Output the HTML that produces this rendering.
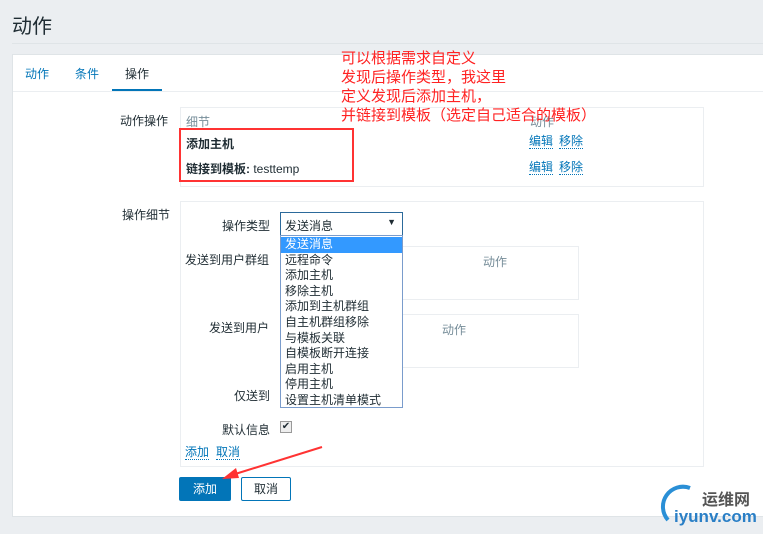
<!DOCTYPE html>
<html><head><meta charset="utf-8"><style>
*{margin:0;padding:0;box-sizing:border-box}
body{width:763px;height:534px;background:#ebeef1;font-family:"Liberation Sans","Noto Sans CJK SC",sans-serif;font-size:12px;color:#1f2c33;position:relative;overflow:hidden}
.a{position:absolute;white-space:nowrap}
.lnk{color:#0275b8;border-bottom:1px dotted #0275b8;line-height:13px}
.red{color:#f22;font-size:15px;line-height:19px}
.opt{height:15.6px;line-height:15.6px;padding-left:4px;font-size:12px}
</style></head><body>
<div class="a" style="left:12px;top:10px;font-size:20px;color:#1f2c33">动作</div>
<div class="a" style="left:12px;top:43px;width:751px;height:1px;background:#dfe4e7"></div>
<div class="a" style="left:12px;top:54px;width:760px;height:463px;background:#fff;border:1px solid #dfe4e7"></div>
<div class="a" style="left:25px;top:65px;color:#0275b8">动作</div>
<div class="a" style="left:75px;top:65px;color:#0275b8">条件</div>
<div class="a" style="left:125px;top:65px">操作</div>
<div class="a" style="left:112px;top:89px;width:50px;height:3px;background:#0275b8"></div>
<div class="a" style="left:13px;top:91px;width:750px;height:1px;background:#ebeef1"></div>
<div class="a" style="left:120px;top:112px">动作操作</div>
<div class="a" style="left:180px;top:107px;width:524px;height:80px;border:1px solid #ebeef1"></div>
<div class="a" style="left:186px;top:113px;color:#768d99">细节</div>
<div class="a" style="left:530px;top:113px;color:#768d99">动作</div>
<div class="a" style="left:186px;top:135px;font-weight:bold">添加主机</div>
<div class="a" style="left:186px;top:160px"><b>链接到模板:</b> testtemp</div>
<div class="a" style="left:179px;top:128px;width:175px;height:54px;border:2px solid #f33"></div>
<div class="a lnk" style="left:529px;top:135px">编辑</div><div class="a lnk" style="left:559px;top:135px">移除</div>
<div class="a lnk" style="left:529px;top:161px">编辑</div><div class="a lnk" style="left:559px;top:161px">移除</div>
<div class="a red" style="left:341px;top:49px">可以根据需求自定义<br>发现后操作类型，我这里<br>定义发现后添加主机，<br>并链接到模板（选定自己适合的模板）</div>
<div class="a" style="left:122px;top:206px">操作细节</div>
<div class="a" style="left:180px;top:201px;width:524px;height:266px;border:1px solid #ebeef1"></div>
<div class="a" style="left:222px;top:217px">操作类型</div>
<div class="a" style="left:185px;top:251px">发送到用户群组</div>
<div class="a" style="left:209px;top:319px">发送到用户</div>
<div class="a" style="left:234px;top:387px">仅送到</div>
<div class="a" style="left:222px;top:421px">默认信息</div>
<div class="a" style="left:280px;top:246px;width:299px;height:54px;border:1px solid #ebeef1"></div>
<div class="a" style="left:483px;top:253px;color:#768d99">动作</div>
<div class="a" style="left:280px;top:314px;width:299px;height:54px;border:1px solid #ebeef1"></div>
<div class="a" style="left:442px;top:321px;color:#768d99">动作</div>
<div class="a" style="left:280px;top:421px;width:12px;height:12px;border:1px solid #999;background:#eee;font-size:10px;line-height:10px;text-align:center">✔</div>
<div class="a" style="left:280px;top:212px;width:123px;height:24px;border:1px solid #2c6a9b;background:#fff;padding:4px 4px">发送消息<span style="position:absolute;right:6px;top:4px;font-size:9px">▼</span></div>
<div class="a" style="left:280px;top:235px;width:123px;height:173px;border:1px solid #7a9ccc;background:#fff;padding-top:1px">
<div class="opt" style="background:#3399ff;color:#fff">发送消息</div><div class="opt">远程命令</div><div class="opt">添加主机</div><div class="opt">移除主机</div><div class="opt">添加到主机群组</div><div class="opt">自主机群组移除</div><div class="opt">与模板关联</div><div class="opt">自模板断开连接</div><div class="opt">启用主机</div><div class="opt">停用主机</div><div class="opt">设置主机清单模式</div></div>
<div class="a lnk" style="left:185px;top:446px">添加</div><div class="a lnk" style="left:216px;top:446px">取消</div>
<div class="a" style="left:179px;top:477px;width:52px;height:24px;background:#0275b8;border-radius:2px;color:#fff;text-align:center;line-height:24px">添加</div>
<div class="a" style="left:241px;top:477px;width:50px;height:24px;border:1px solid #0275b8;border-radius:2px;color:#1f2c33;text-align:center;line-height:22px;background:#fff">取消</div>
<svg class="a" style="left:0;top:0" width="763" height="534"><line x1="322" y1="447" x2="232" y2="475" stroke="#f33" stroke-width="2"/><polygon points="222,479 236,468 239,478" fill="#f33"/>
<path d="M668 520 A20 20 0 0 1 690 488" stroke="#2a8fd6" stroke-width="4" fill="none"/></svg>
<div class="a" style="left:702px;top:486px;font-size:16px;font-weight:bold;color:#555">运维网</div>
<div class="a" style="left:674px;top:507px;font-size:17px;font-weight:bold;color:#2a7fc6">iyunv.com</div>
</body></html>
